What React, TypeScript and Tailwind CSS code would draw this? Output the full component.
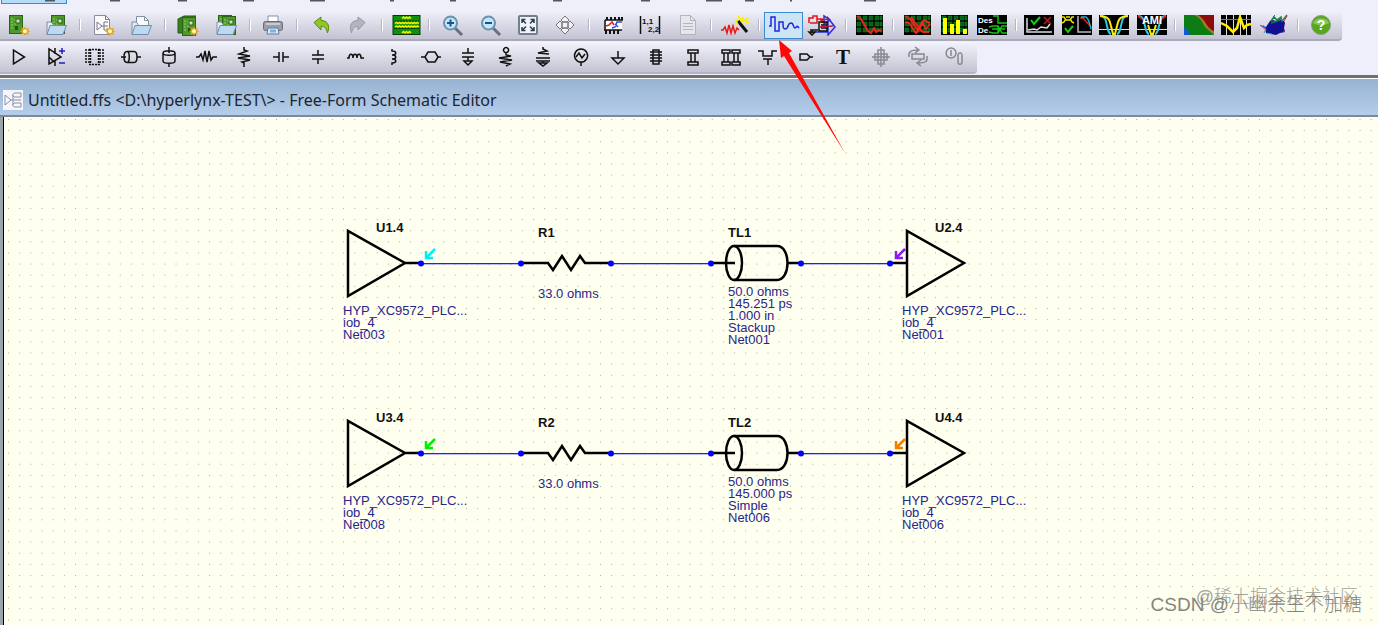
import type { ReactNode } from 'react';

interface Tool {
  label: string;
  icon: ReactNode;
  active?: boolean;
}

const Star = () => (
  <g>
    <path d="M21 12.500l1.400 2.200 2.500-1-.9 2.600 2.300 1-2.300 1.100.9 2.500-2.500-.9L21 22l-1.400-2.100-2.500.9.9-2.500-2.300-1.100 2.300-1-.9-2.600 2.500 1z" fill="#e8a418" />
    <circle cx="21" cy="17.200" r="2" fill="#fff6c0" />
  </g>
);

const Folder = () => (
  <g>
    <path d="M6 20V8h4l2 2v10z" fill="#e4edf5" stroke="#7a8fa5" />
    <path d="M6 20.500l3-9h16.500l-3.500 9z" fill="#bcd9f0" stroke="#6f8ca8" />
  </g>
);

const Board = ({ x, y }: { x: number; y: number }) => (
  <g transform={`translate(${x} ${y})`}>
    <rect x=".5" y=".5" width="13" height="18" fill="#4c9a2a" stroke="#2c6416" />
    <path d="M3 3v12M5 5h2M5 9h2" stroke="#9ad070" strokeDasharray="2 1" />
    <rect x="7" y="4" width="4" height="4" fill="#d8d8c8" stroke="#2c6416" />
    <rect x="6" y="11" width="3" height="4" fill="#1f5a10" />
  </g>
);

const Scope = ({ grid = false, children }: { grid?: boolean; children: ReactNode }) => (
  <g>
    <rect x={grid ? 2 : 0} y="1" width={grid ? 27 : 30} height="20" fill="#000" />
    {grid && (
      <path
        d="M3 2h4v4H3zM9 2h4v4H9zM15 2h4v4h-4zM21 2h4v4h-4zM3 8h4v4H3zM9 8h4v4H9zM15 8h4v4h-4zM21 8h4v4h-4zM3 14h4v4H3zM9 14h4v4H9zM15 14h4v4h-4zM21 14h4v4h-4zM26 2h2v4h-2zM26 8h2v4h-2zM26 14h2v4h-2z"
        fill="#0b5c18"
        stroke="#0c8a24"
        strokeWidth=".5"
      />
    )}
    {children}
  </g>
);

const Stroke = ({ d, color = '#111', width = 1.5 }: { d: string; color?: string; width?: number }) => (
  <path d={d} fill="none" stroke={color} strokeWidth={width} />
);

const mainTools: (Tool | null)[] = [
  { label: 'New board', icon: <><Board x={5} y={1} /><Star /></> },
  { label: 'Open board', icon: <><Board x={10} y={1} /><Folder /></> },
  null,
  {
    label: 'New schematic',
    icon: (
      <>
        <path d="M5.500 1.500h11l4 4v15h-15z" fill="#fafafc" stroke="#8a8a98" />
        <path d="M16.500 1.500v4h4M8 8v8l5-4zM13 12h2M19 8h-4v8h3M15 12h4" fill="none" stroke="#777784" />
        <Star />
      </>
    ),
  },
  {
    label: 'Open schematic',
    icon: (
      <>
        <path d="M10.500 2.500h8l4 4v9h-12z" fill="#fafafc" stroke="#8090a0" />
        <path d="M18.500 2.500v4h4" fill="none" stroke="#8090a0" />
        <Folder />
      </>
    ),
  },
  null,
  { label: 'New project', icon: <><path d="M5 5l6-3h12l-5 3v14H5z" fill="#398020" stroke="#245c12" /><Board x={9} y={3} /><Star /></> },
  { label: 'Open project', icon: <><Board x={7} y={1} /><Board x={11} y={2} /><Folder /></> },
  null,
  {
    label: 'Print',
    icon: (
      <>
        <path d="M10 8V2h10v6" fill="#fff" stroke="#8890a0" />
        <rect x="5.500" y="7.500" width="19" height="9" rx="2" fill="#9a9ea8" stroke="#666a76" />
        <path d="M8 10h14" stroke="#d5d8e0" strokeWidth="1.500" />
        <path d="M10 14h10l1 6H9z" fill="#dcecfb" stroke="#687890" />
        <path d="M12 15.500h6v3h-6z" fill="#72b4ec" />
      </>
    ),
  },
  null,
  { label: 'Undo', icon: <path d="M8 8.500l7-5.500v3.500c6 0 9.500 4 6.500 12.500-1-4.500-2.500-6.500-6.500-6.500V16z" fill="#8fc726" stroke="#5a8a14" /> },
  { label: 'Redo', icon: <path d="M22 8.500L15 3v3.500C9 6.500 5.500 10.500 8.500 19c1-4.500 2.500-6.500 6.500-6.500V16z" fill="#b4b4c0" stroke="#9898a6" /> },
  null,
  {
    label: 'Stackup',
    icon: (
      <>
        <rect x="2" y="1.500" width="27" height="19" fill="#109010" stroke="#063c06" />
        <path d="M3 7h25M3 14.500h25" stroke="#064806" />
        <path d="M11 4.500l1.500-1.500 1.500 1.500 1.500-1.500 1.500 1.500 1.500-1.500 1.500 1.500M4 9.500l1.500-1 1.500 1 1.500-1 1.500 1 1.500-1 1.500 1 1.500-1 1.500 1 1.500-1 1.500 1 1.500-1 1.500 1 1.500-1 1.500 1 1.500-1 1.500 1M4 13l1.500-1 1.500 1 1.500-1 1.500 1 1.500-1 1.500 1 1.500-1 1.500 1 1.500-1 1.500 1 1.500-1 1.500 1 1.500-1 1.500 1 1.500-1 1.500 1M11 19l1.500-1.500 1.500 1.500 1.500-1.500 1.500 1.500 1.500-1.500 1.500 1.500" fill="none" stroke="#f4f400" strokeWidth="1.500" />
      </>
    ),
  },
  null,
  {
    label: 'Zoom in',
    icon: (
      <>
        <path d="M17 14l7 7" stroke="#66707e" strokeWidth="3" />
        <circle cx="12.500" cy="9" r="6.500" fill="#c5e6fa" stroke="#6b93b0" strokeWidth="2" />
        <path d="M9 9h7M12.500 5.500v7" stroke="#14568c" strokeWidth="2" />
      </>
    ),
  },
  {
    label: 'Zoom out',
    icon: (
      <>
        <path d="M17 14l7 7" stroke="#66707e" strokeWidth="3" />
        <circle cx="12.500" cy="9" r="6.500" fill="#c5e6fa" stroke="#6b93b0" strokeWidth="2" />
        <path d="M9 9h7" stroke="#14568c" strokeWidth="2" />
      </>
    ),
  },
  {
    label: 'Zoom to fit',
    icon: (
      <>
        <rect x="6" y="2" width="18" height="18" rx="1" fill="#eef4fa" stroke="#70808e" strokeWidth="2" />
        <path d="M9 9V5.500h3.500M9 5.500l4 4M17.500 5.500H21V9M21 5.500l-4 4M9 13v3.500h3.500M9 16.500l4-4M17.500 16.500H21V13M21 16.500l-4-4" fill="none" stroke="#333c44" strokeWidth="1.500" />
      </>
    ),
  },
  {
    label: 'Pan',
    icon: <path d="M15 2l4 4-2 2h-4l-2-2zM15 20l4-4-2-2h-4l-2 2zM6 11l4-4 2 2v4l-2 2zM24 11l-4-4-2 2v4l2 2zM12 8h6v6h-6z" fill="#f2f2f4" stroke="#73737a" />,
  },
  null,
  {
    label: 'Component models',
    icon: (
      <>
        <rect x="8" y="6" width="16" height="10" fill="#fff" />
        <path d="M9 3v3M13 3v3M17 3v3M21 3v3M24 3v3M8 16v4M12 16v4M16 16v4M20 16v4" stroke="#111" strokeWidth="2" />
        <path d="M7 6h18M6 16h18M7 6v10" stroke="#111" strokeWidth="1.500" />
        <Stroke d="M8 12l3-1 3-3 2 3" color="#e82020" />
        <Stroke d="M14 14l3-1 2-5 5 0M17 10l3 3" color="#2848e8" />
      </>
    ),
  },
  {
    label: 'S-parameters',
    icon: (
      <>
        <path d="M5.500 2v18M24.500 2v18" stroke="#111" strokeWidth="1.500" />
        <text x="7" y="10" fontSize="8" fontWeight="700" fill="#111">1,1</text>
        <text x="13" y="18" fontSize="8" fontWeight="700" fill="#111">2,2</text>
      </>
    ),
  },
  {
    label: 'Report',
    icon: (
      <>
        <path d="M7.500 1.500h10l5 5v14h-15z" fill="#e6e6ec" stroke="#b4b4be" />
        <path d="M17.500 1.500v5h5M10 9.500h10M10 12.500h10M10 15.500h10" fill="none" stroke="#b4b4be" />
      </>
    ),
  },
  null,
  {
    label: 'Noise wizard',
    icon: (
      <>
        <Stroke d="M1 16h2l2-3 2 6 2-8 2 8 2-7 2 7 2-5 2 2" color="#e81818" />
        <path d="M18 7l9 11" stroke="#111" strokeWidth="3" />
        <path d="M15 7l3-1M18 2l2 3M23 3l-1 4M28 4l-4 3M15 10l3-1M26 8h3M20 5l3 3" stroke="#f8f000" strokeWidth="2" />
      </>
    ),
  },
  null,
  {
    label: 'Run interactive simulation',
    active: true,
    icon: <Stroke d="M0 12h2V3h4v14h4V8h4v3c0 4 2 5 4 3 2-3 1-5 4-5 3 0 2 5 4 5s1-4 4 0" color="#2424d8" />,
  },
  {
    label: 'Run batch simulation',
    icon: (
      <>
        <Stroke d="M2 9V4h4V2h4v7H3M10 5h5v3h3" color="#e01818" />
        <Stroke d="M17 2v8l6-4zM21 4v17l7-8zM8 18h13" color="#2430e0" />
        <Stroke d="M3 16h8M5 16v3M2 18h6l-3 3zM12 8v9h8V8zM14 11h6M14 14h7" />
        <Stroke d="M13 6l10-1M12 13l14-1" color="#c01838" />
      </>
    ),
  },
  null,
  { label: 'Oscilloscope', icon: <Scope grid><Stroke d="M3 2l4 3 7 12 3 2 3-5 2 4 3-2 2 1" color="#e82818" width={2} /></Scope> },
  null,
  { label: 'Crosstalk', icon: <Scope grid><Stroke d="M3 2l5 3 8 12 4-9 4 7 4-5M3 8l4 1 7 10 4-5 4-8 6 3M9 3l8 11 4 4h6" color="#e82818" width={2} /></Scope> },
  { label: 'Spectrum', icon: <Scope grid><path d="M4 4h4v16H4zM11 10h4v10h-4zM17 6h4v14h-4zM24 15h4v5h-4z" fill="#ffff00" /></Scope> },
  {
    label: 'DDR results',
    icon: (
      <Scope>
        <text x="1" y="9" fontSize="8" fontWeight="700" fill="#fff">Des</text>
        <text x="1" y="19" fontSize="8" fontWeight="700" fill="#fff">De</text>
        <Stroke d="M16 2h5v7h9M12 13l4-1h5l4 7h5M12 18l4 1h5l4-7h5M21 12v7M15 15h13" color="#18c018" />
      </Scope>
    ),
  },
  null,
  {
    label: 'Channel check',
    icon: (
      <Scope>
        <Stroke d="M3 4v14h25M4 16l6-1 3 1 4-3 6 1 3-4" color="#ddd" />
        <path d="M7 6l3 4 6-7" stroke="#18d018" strokeWidth="2" fill="none" />
        <path d="M20 3l7 7M27 3l-7 7" stroke="#c01818" strokeWidth="1.500" />
      </Scope>
    ),
  },
  {
    label: 'Eye mask check',
    icon: (
      <Scope>
        <Stroke d="M0 3h2l2 3h4l2-3h2M0 9l2-1 2-3M8 5l2 3 2 1M4 3h4" color="#f0e400" />
        <path d="M3 14l3 4 5-6" stroke="#18d018" strokeWidth="2" fill="none" />
        <Stroke d="M16 2v16h13" color="#bbb" />
        <Stroke d="M18 4h3l8 9" color="#e02020" />
        <Stroke d="M19 3h5c3 2 4 7 5 12" color="#18b8d0" />
      </Scope>
    ),
  },
  {
    label: 'Eye diagram',
    icon: (
      <Scope>
        <path d="M0 15.500h30" stroke="#ddd" />
        <path d="M1 2c6 0 6 6 7 10 1 5 3 8 4 8M29 2c-6 0-6 6-7 10-1 5-3 8-4 8" stroke="#30c8e8" strokeWidth="2" fill="none" />
        <path d="M1 2c9 0 10 5 11 10l2 8h2l2-8c1-5 2-10 11-10" stroke="#ffee00" strokeWidth="2" fill="none" />
      </Scope>
    ),
  },
  {
    label: 'AMI channel',
    icon: (
      <Scope>
        <path d="M0 15.500h30" stroke="#ddd" />
        <path d="M1 2c6 0 6 6 7 10 1 5 3 8 4 8M29 2c-6 0-6 6-7 10-1 5-3 8-4 8" stroke="#30c8e8" strokeWidth="2" fill="none" />
        <path d="M11 11l3 9h2l3-9" stroke="#ffee00" strokeWidth="2" fill="none" />
        <path d="M1 2l4 3M29 2l-4 3" stroke="#e02020" strokeWidth="2" />
        <text x="15" y="10" fontSize="11" fontWeight="700" fill="#fff" textAnchor="middle">AMI</text>
      </Scope>
    ),
  },
  null,
  {
    label: 'Field map',
    icon: (
      <>
        <rect x="0" y="1" width="30" height="20" fill="#0c7c14" />
        <path d="M10 1h20v20C26 17 21 14 19 10 17 5 14 3 10 1z" fill="#a87820" />
        <path d="M14 1h16v16C25 15 23 11 21 8 19 5 17 3 14 1z" fill="#8c0c0c" />
        <path d="M0 14c5 1 5 4 5 7H0z" fill="#1458d8" />
      </>
    ),
  },
  {
    label: 'Impedance plot',
    icon: (
      <Scope>
        <path d="M5.500 1v20M12.500 1v20M19.500 1v20M25.500 1v20" stroke="#ddd" />
        <path d="M0 5.500h30" stroke="#18c018" />
        <path d="M0 9l6 3 6 6 4-4 3-11 4 11 3-3 4-1" stroke="#ffee00" strokeWidth="2.500" fill="none" />
      </Scope>
    ),
  },
  {
    label: '3D view',
    icon: (
      <>
        <path d="M1 11l6 2 4-6 3-1 3 1 3-2 5 2 1 2-1 5 1 4-5 1-4 2-5-1-5-1-1-5z" fill="#101090" />
        <path d="M12 7l3-4 3 3 4-3 1 5M24 6l4-5M12 9l9-3" stroke="#188040" strokeWidth="1.500" fill="none" />
        <path d="M1 11l6 5M24 18l2-1M28 2l-3 5M14 3l2-2" stroke="#d02850" fill="none" />
        <path d="M4 11l3 4-2 4M8 19l5 1" stroke="#20a0d8" fill="none" />
      </>
    ),
  },
  null,
  {
    label: 'Help',
    icon: (
      <>
        <circle cx="15" cy="11" r="9.500" fill="#55a81c" stroke="#8a9a80" />
        <path d="M7 9a8.500 7 0 0 1 16 0c-5 3-11 3-16 0z" fill="#86c850" />
        <text x="15" y="16" fontSize="14" fontWeight="700" fill="#fff" textAnchor="middle">?</text>
      </>
    ),
  },
];

const partTools: Tool[] = [
  { label: 'IC buffer', icon: <Stroke d="M9.500 4v14l11-7z" /> },
  { label: 'Differential buffer', icon: <><Stroke d="M8 3v15l12-7zM14 2v6M14 14v6M8 11l5 5" /><Stroke d="M18 5h6M21 2v6M18 17h6" color="#2020c0" /></> },
  {
    label: 'IC package',
    icon: (
      <>
        <path d="M11.500 3v16M19.500 3v16M10 3.500h11M10 18.500h11" stroke="#111" strokeDasharray="2 1" strokeWidth="1.500" />
        <path d="M6 4h5M6 7h5M6 10h5M6 13h5M6 16h5M20 4h5M20 7h5M20 10h5M20 13h5M20 16h5" stroke="#111" strokeWidth="1.500" strokeDasharray="2 1" />
      </>
    ),
  },
  { label: 'Transmission line', icon: <Stroke d="M5 11h5M21 11h4M11 5.500h7c4 0 4 11 0 11h-7c-4 0-4-11 0-11c3 0 3 11 0 11" /> },
  { label: 'Vertical line', icon: <Stroke d="M15 1v6M15 17v4M9 7v8c0 3 12 3 12 0V7c0-3-12-3-12 0c0 3 12 3 12 0" /> },
  { label: 'Resistor', icon: <Stroke d="M5 11h3l2-3 2 6 2-9 2 11 2-11 2 9 2-3h4" /> },
  { label: 'Pull-up resistor', icon: <Stroke d="M15 1v3l3 1-8 3 11 2-12 2 12 2-8 2 2 1v4" /> },
  { label: 'Capacitor', icon: <Stroke d="M7 11h6M17 11h6M13 6v10M17 6v10" /> },
  { label: 'Vertical capacitor', icon: <Stroke d="M15 4v5M15 13v5M9 9h12M9 13h12" /> },
  { label: 'Inductor', icon: <Stroke d="M6 12h2c0-5 4-5 4 0c0-5 4-5 4 0c0-5 4-5 4 0h3" /> },
  { label: 'Vertical inductor', icon: <Stroke d="M14 3v2c5 0 5 4 0 4c5 0 5 4 0 4c5 0 5 4 0 4v2" /> },
  { label: 'Ferrite bead', icon: <Stroke d="M5 11h4l3-5h7l3 5h3M9 11l3 5h7l3-5" /> },
  { label: 'Grounded capacitor', icon: <Stroke d="M15 2v5M9 7h12M9 11h12M15 11v4M11 15h8l-4 4z" /> },
  { label: 'Terminated resistor', icon: <Stroke d="M15 7v2l5 1-12 2 13 2-12 2 10 2-4 2M15 1.500a2.500 2.500 0 1 0 .1 0z" /> },
  { label: 'AC termination', icon: <Stroke d="M15 1v2l4 2-9 2 11 1M8 12h14M8 15h14M15 15v2M11 17h8l-4 3z" /> },
  { label: 'Source', icon: <Stroke d="M15 3a6.500 6.500 0 1 0 .1 0zM15 16v4M10 11l3-4 3 5 3-4" /> },
  { label: 'Ground', icon: <Stroke d="M15 5v7M9 12h12l-6 6z" /> },
  { label: 'Connector', icon: <Stroke d="M12 4h6v14h-6zM9 6h12M9 9h12M9 12h12M9 15h12" /> },
  { label: 'Via', icon: <Stroke d="M10 4h10v3H10zM10 16h10v3H10zM13 7v9M17 7v9" /> },
  { label: 'Differential via', icon: <Stroke d="M6 4h8v3H6zM6 16h8v3H6zM8 7v9M12 7v9M16 4h8v3h-8zM16 16h8v3h-8zM18 7v9M22 7v9" /> },
  { label: 'Stub', icon: <Stroke d="M5 5h5v5h9V5h5M10 13h9M15 13v6" /> },
  { label: 'Port', icon: <Stroke d="M9 8h7l3 3-3 3H9zM19 11h3" /> },
  { label: 'Text', icon: <text x="15" y="18" fontFamily="Liberation Serif" fontSize="21" fontWeight="700" fill="#111" textAnchor="middle">T</text> },
  { label: 'Move', icon: <Stroke d="M12 4h6v14h-6zM9 8h12v6H9zM15 1v20M6 11h18" color="#888890" /> },
  { label: 'Rotate', icon: <Stroke d="M9 8h12v5H9zM6 11c-1-5 2-7 9-7M12 1l4 3-4 3M24 10c1 6-2 7-9 7M18 14l-4 3 4 3" color="#888890" /> },
  { label: 'Properties', icon: <Stroke d="M11 2a5 5 0 1 0 .1 0zM11 4v6M20 7c-2 0-2 1-2 3v6c0 3 4 3 4 0v-6c0-2 0-3-2-3" color="#888890" /> },
];

const ToolButton = ({ tool }: { tool: Tool }) => (
  <button
    type="button"
    aria-label={tool.label}
    className={`flex h-[27px] min-w-0 flex-1 items-center justify-center ${
      tool.active ? 'border border-[#3a8ccc] bg-[#cde4f6]' : ''
    }`}
  >
    <svg className="h-[22px] w-8 shrink-0" viewBox="-1 0 32 22" fontFamily="Liberation Sans">
      {tool.icon}
    </svg>
  </button>
);

// leftovers of the menu bar above the toolbars: [x, width]
const menuMarks = [
  [45, 10], [110, 10], [178, 9], [243, 11], [310, 15], [390, 4], [450, 6],
  [553, 9], [641, 9], [706, 16], [745, 9], [790, 2], [864, 12],
];

interface Net {
  y: number;
  driver: string;
  receiver: string;
  resistor: string;
  line: string;
  driverInfo: string[];
  receiverInfo: string[];
  lineInfo: string[];
  probes: [string, string];
}

const nets: Net[] = [
  {
    y: 146,
    driver: 'U1.4',
    receiver: 'U2.4',
    resistor: 'R1',
    line: 'TL1',
    driverInfo: ['HYP_XC9572_PLC...', 'iob_4', 'Net003'],
    receiverInfo: ['HYP_XC9572_PLC...', 'iob_4', 'Net001'],
    lineInfo: ['50.0 ohms', '145.251 ps', '1.000 in', 'Stackup', 'Net001'],
    probes: ['#00f0f0', '#8a1cf0'],
  },
  {
    y: 336,
    driver: 'U3.4',
    receiver: 'U4.4',
    resistor: 'R2',
    line: 'TL2',
    driverInfo: ['HYP_XC9572_PLC...', 'iob_4', 'Net008'],
    receiverInfo: ['HYP_XC9572_PLC...', 'iob_4', 'Net006'],
    lineInfo: ['50.0 ohms', '145.000 ps', 'Simple', 'Net006'],
    probes: ['#00f000', '#f08000'],
  },
];

const Name = ({ x, y, children }: { x: number; y: number; children: string }) => (
  <text x={x} y={y} fill="#111" fontWeight="700">{children}</text>
);

const Info = ({ x, y, lines }: { x: number; y: number; lines: string[] }) => (
  <g fill="#26268c">
    {lines.map((line, i) => (
      <text key={line} x={x} y={y + i * 12}>{line}</text>
    ))}
  </g>
);

const Probe = ({ x, color }: { x: number; color: string }) => (
  <path d={`M${x + 9} -14l-8 8M${x} -12v7h7`} fill="none" stroke={color} strokeWidth="2.500" />
);

const NetRow = ({ net }: { net: Net }) => (
  <g transform={`translate(339 ${net.y})`}>
    <g fill="#2020ff">
      <rect x="78" y="0" width="100" height="1.300" />
      <rect x="268" y="0" width="100" height="1.300" />
      <rect x="458" y="0" width="89" height="1.300" />
    </g>
    <Probe x={83} color={net.probes[0]} />
    <Probe x={553} color={net.probes[1]} />
    <g fill="none" stroke="#000" strokeWidth="2.500">
      <path d="M5 -32v65L62 0zM62 0h16" />
      <path d="M178 0h27l5 7 9-14 9 14 9-14 5 7h26" />
      <path d="M368 0h24M444 0h14M391 -17h43c14 0 14 34 0 34h-43" />
      <ellipse cx="391" cy="0" rx="8" ry="17" />
      <path d="M547 0h17M564 -32v65L621 0z" />
    </g>
    {[78, 178, 268, 368, 458, 547].map((x) => (
      <circle key={x} cx={x} cy="0.500" r="3" fill="#0000ff" />
    ))}
    <Name x={33} y={-31}>{net.driver}</Name>
    <Name x={195} y={-26}>{net.resistor}</Name>
    <Name x={385} y={-26}>{net.line}</Name>
    <Name x={592} y={-31}>{net.receiver}</Name>
    <Info x={0} y={52} lines={net.driverInfo} />
    <Info x={195} y={35} lines={['33.0 ohms']} />
    <Info x={385} y={33} lines={net.lineInfo} />
    <Info x={559} y={52} lines={net.receiverInfo} />
  </g>
);

function App() {
  return (
    <div className="relative flex min-h-screen flex-col overflow-hidden bg-[#eeeffb] font-['Liberation_Sans',sans-serif]">
      <header className="border-b-[3px] border-[#707070] pb-px">
        <div className="h-[9px]">
          <svg className="block h-[9px] w-full">
            <rect x="1.500" y="-2" width="65" height="5.500" fill="#b4dcf8" stroke="#2c90e0" />
            {menuMarks.map(([x, width]) => (
              <rect key={x} x={x} y="0" width={width} height="1.500" fill="#555562" />
            ))}
          </svg>
        </div>
        <div className="flex h-8 w-full max-w-[1342px] items-center rounded-r border-b-2 border-[#a9a9b9] bg-linear-to-b from-[#f3f3fc] to-[#c3c3d3] pt-[2px] pr-[2px]">
          {mainTools.map((tool, i) =>
            tool ? (
              <ToolButton key={tool.label} tool={tool} />
            ) : (
              <span key={i} className="mx-1 h-3 w-[2px] border-l border-[#b4b4c4] bg-white" />
            )
          )}
        </div>
        <div className="mt-px flex h-8 w-full max-w-[977px] items-center rounded-r border-b-2 border-[#b4b4c4] bg-linear-to-b from-[#f3f3fc] to-[#c3c3d3] pr-[3px]">
          {partTools.map((tool) => (
            <ToolButton key={tool.label} tool={tool} />
          ))}
        </div>
      </header>

      <main className="flex flex-1 flex-col">
        <div className="flex h-[39px] items-center gap-[5px] border-t border-b-2 border-t-white border-b-[#7c8a94] bg-linear-to-b from-[#98b3d1] to-[#b3cdea] pt-[6px] pl-[3px]">
          <svg className="h-5 w-5 bg-[#f4f6fa]" viewBox="0 0 20 20" fill="none" stroke="#8890a4">
            <path d="M2 5v10l6-5zM8 10h2M18 3h-6c-3 0-3 4 0 4h6zM18 13h-6c-3 0-3 4 0 4h6zM10 5v10M10 10h8" />
          </svg>
          <h1 className="font-['Noto_Sans',sans-serif] text-base whitespace-pre text-[#1c2430]">
            {'Untitled.ffs <D:\\hyperlynx-TEST\\> - Free-Form Schematic Editor'}
          </h1>
        </div>

        <div className="relative flex flex-1 border-l-[3px] border-[#9aa4ac] bg-[#fffff0]">
          <div className="w-px bg-black" />
          <svg className="min-h-[508px] min-w-0 flex-1" fontFamily="Liberation Sans" fontSize="13">
            <defs>
              <pattern id="grid" x="4" y="2" width="11.170" height="11.120" patternUnits="userSpaceOnUse">
                <rect width="1" height="1" fill="#aaaa9c" />
              </pattern>
            </defs>
            <rect width="100%" height="100%" fill="url(#grid)" />
            {nets.map((net) => (
              <NetRow key={net.driver} net={net} />
            ))}
          </svg>
          <p className="absolute right-5 bottom-4 font-['Liberation_Sans','Noto_Sans_CJK_SC',sans-serif] text-lg leading-6 font-light text-[#a2a298]">
            @稀土掘金技术社区
          </p>
          <p className="absolute right-4 bottom-2 font-['Liberation_Sans','Noto_Sans_CJK_SC',sans-serif] text-[19px] leading-6 font-light text-[#85857d]">
            CSDN @小幽余生不加糖
          </p>
        </div>
      </main>

      <svg className="pointer-events-none absolute top-10 left-[779px] h-[114px] w-[68px]" viewBox="0 0 68 114">
        <path d="M0 0l13 11-3 2 56 100L5 16l-3 2z" fill="#ff0808" />
      </svg>
    </div>
  );
}

export default App;
